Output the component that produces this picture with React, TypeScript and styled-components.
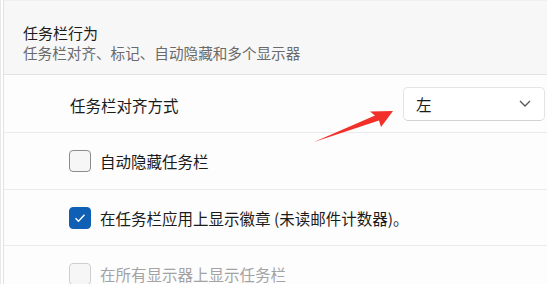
import styled, { createGlobalStyle } from "styled-components";

const GlobalStyle = createGlobalStyle`
  body {
    margin: 0;
    background: #ffffff;
    font-family: "Noto Sans CJK SC", "Noto Sans", sans-serif;
    overflow: hidden;
  }
`;

const Page = styled.div`
  position: relative;
  width: 547px;
  height: 284px;
  overflow: hidden;
  border-left: 1px solid #e8e8e8;
  padding-left: 2px;
  box-sizing: border-box;
`;

const Panel = styled.div`
  border-left: 1px solid #e2e2e2;
  height: 100%;
`;

const Header = styled.div`
  height: 75px;
  box-sizing: border-box;
  padding: 22px 0 0 19px;
  background: #f7f7f7;
  border-top: 1px solid #f0f0f0;
  border-bottom: 1px solid #e3e3e3;
`;

const Title = styled.div`
  font-size: 15px;
  line-height: 20px;
  color: #1b1b1b;
`;

const Subtitle = styled.div`
  font-size: 14.6px;
  line-height: 20px;
  color: #6a6a6a;
`;

const Row = styled.div<{ $h: number }>`
  display: flex;
  align-items: center;
  height: ${({ $h }) => $h}px;
  box-sizing: border-box;
  padding: 0 2px 0 65px;
  background: #fdfdfd;
  border-bottom: 1px solid #ebebeb;
`;

const Label = styled.span<{ $disabled?: boolean; $indent?: number }>`
  font-size: 15.5px;
  margin-left: ${({ $indent }) => $indent ?? 0}px;
  padding-top: ${({ $indent }) => ($indent ? 3 : 0)}px;
  color: ${({ $disabled }) => ($disabled ? "#a3a3a3" : "#1b1b1b")};
  white-space: nowrap;
`;

const Check = styled.span<{ $checked?: boolean; $disabled?: boolean }>`
  width: 22px;
  height: 22px;
  box-sizing: border-box;
  border-radius: 4px;
  margin-right: 9px;
  flex: none;
  display: flex;
  align-items: center;
  justify-content: center;
  background: ${({ $checked }) => ($checked ? "#0f5fb5" : "#f6f6f6")};
  border: 1px solid
    ${({ $checked, $disabled }) =>
      $checked ? "#0f5fb5" : $disabled ? "#cfcfcf" : "#8c8c8c"};
`;

const Select = styled.div`
  margin-left: auto;
  width: 142px;
  height: 34px;
  box-sizing: border-box;
  display: flex;
  align-items: center;
  justify-content: space-between;
  padding: 0 13px 0 12px;
  background: #ffffff;
  border: 1px solid #e4e4e4;
  border-bottom-color: #d2d2d2;
  border-radius: 5px;
  font-size: 15.5px;
  color: #1b1b1b;
`;

const Arrow = styled.svg`
  position: absolute;
  left: 0;
  top: 0;
  pointer-events: none;
`;

export default function App() {
  return (
    <>
      <GlobalStyle />
      <Page>
        <Panel>
          <Header>
            <Title>任务栏行为</Title>
            <Subtitle>任务栏对齐、标记、自动隐藏和多个显示器</Subtitle>
          </Header>
          <Row $h={58}>
            <Label $indent={1}>任务栏对齐方式</Label>
            <Select>
              <span>左</span>
              <svg width="12" height="7" viewBox="0 0 12 7">
                <path d="M1 1l5 5 5-5" fill="none" stroke="#555" strokeWidth="1.3" />
              </svg>
            </Select>
          </Row>
          <Row $h={57}>
            <Check />
            <Label>自动隐藏任务栏</Label>
          </Row>
          <Row $h={56}>
            <Check $checked>
              <svg width="12" height="10" viewBox="0 0 12 10">
                <path d="M1.5 5.2l3 3 6-6.4" fill="none" stroke="#fff" strokeWidth="1.4" />
              </svg>
            </Check>
            <Label>在任务栏应用上显示徽章 (未读邮件计数器)。</Label>
          </Row>
          <Row $h={57}>
            <Check $disabled />
            <Label $disabled>在所有显示器上显示任务栏</Label>
          </Row>
        </Panel>
        <Arrow width="547" height="284" viewBox="0 0 547 284">
          <polygon
            points="313,142 374,115.5 369,111.5 392,111 380,127 378,120.5"
            fill="#f2302a"
          />
        </Arrow>
      </Page>
    </>
  );
}
